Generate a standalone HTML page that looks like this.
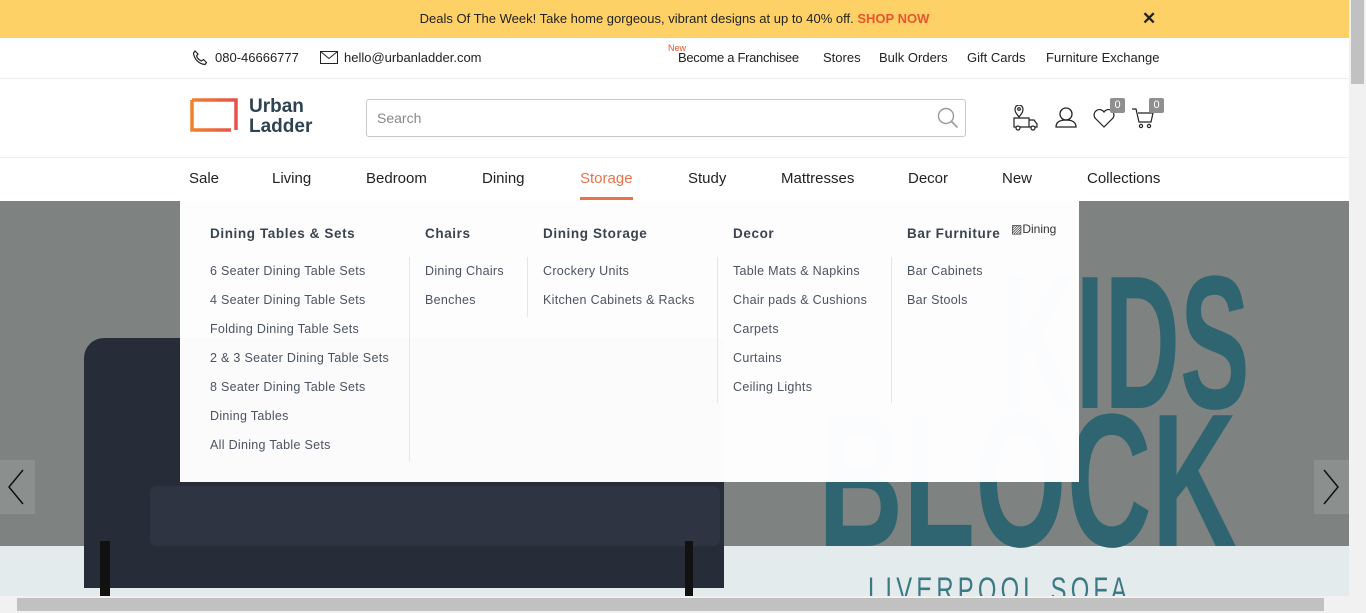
<!DOCTYPE html>
<html><head><meta charset="utf-8"><style>
*{margin:0;padding:0;box-sizing:border-box}
html,body{width:1366px;height:613px;overflow:hidden}
body{font-family:"Liberation Sans",sans-serif;position:relative;background:#fff;color:#222}
.a{position:absolute}
.top{left:0;top:0;width:1349px;height:38px;background:#fed166;text-align:center;font-size:13px;line-height:38px;color:#222}
.top b{color:#e8552d;font-weight:bold}
.nav a{position:absolute;top:170px;font-size:15px;color:#222}
.mm{left:180px;top:201px;width:899px;height:281px;background:rgba(255,255,255,.985)}
.mm h4{position:absolute;font-size:13.5px;font-weight:bold;color:#3a4450;letter-spacing:.6px;top:25px}
.mm p{position:absolute;font-size:12.5px;color:#4a5460;letter-spacing:.3px;line-height:29px}
.vl{position:absolute;width:1px;background:#e6e6e6}
.badge{position:absolute;width:15px;height:15px;background:#8f8f8f;color:#fff;font-size:11px;text-align:center;line-height:15px;border-radius:2px}
.hero{left:0;top:201px;width:1349px;height:395px;overflow:hidden;background:#7e8382}
.big{position:absolute;font-weight:bold;color:#2e6570;white-space:nowrap;transform-origin:left top;font-family:"Liberation Sans Narrow","Liberation Sans",sans-serif}
</style></head><body>
<div class="a top">Deals Of The Week! Take home gorgeous, vibrant designs at up to 40% off. <b>SHOP NOW</b></div>
<div class="a" style="left:1142px;top:9px;font-size:17px;font-weight:bold">✕</div>
<svg class="a" style="left:192px;top:50px" width="16" height="16" viewBox="0 0 16 16"><path d="M3 1l3 3-1.5 2a9 9 0 0 0 5 5L11.5 9.5l3 3-1.5 2C7 14 2 9 1.5 3z" fill="none" stroke="#222" stroke-width="1.2"/></svg>
<div class="a" style="left:215px;top:50px;font-size:13px">080-46666777</div>
<svg class="a" style="left:320px;top:51px" width="18" height="13"><rect x=".5" y=".5" width="17" height="12" fill="none" stroke="#222"/><path d="M.5 .5l8.5 7 8.5-7" fill="none" stroke="#222"/></svg>
<div class="a" style="left:344px;top:50px;font-size:13px">hello@urbanladder.com</div>
<div class="a" style="left:668px;top:43px;font-size:9px;color:#e8552d">New</div>
<div class="a" style="left:678px;top:50px;font-size:13px;letter-spacing:-.3px">Become a Franchisee</div>
<div class="a" style="left:823px;top:50px;font-size:13px">Stores</div>
<div class="a" style="left:879px;top:50px;font-size:13px">Bulk Orders</div>
<div class="a" style="left:967px;top:50px;font-size:13px">Gift Cards</div>
<div class="a" style="left:1046px;top:50px;font-size:13px">Furniture Exchange</div>
<div class="a" style="left:0;top:78px;width:1349px;height:1px;background:#eee"></div>
<svg class="a" style="left:190px;top:98px" width="50" height="36"><defs><linearGradient id="g"><stop offset="0" stop-color="#f0822c"/><stop offset="1" stop-color="#e84f4f"/></linearGradient></defs><path d="M2 2H46V32M41 32H2V2" fill="none" stroke="url(#g)" stroke-width="3.5"/></svg>
<div class="a" style="left:249px;top:97px;font-size:19px;font-weight:bold;color:#2e4352;line-height:20px">Urban<br>Ladder</div>
<div class="a" style="left:366px;top:99px;width:600px;height:38px;border:1px solid #c8c8c8;border-radius:3px;font-size:14px;color:#888;padding:10px 10px">Search</div>
<svg class="a" style="left:937px;top:107px" width="22" height="22"><circle cx="9" cy="9" r="7.5" fill="none" stroke="#999" stroke-width="1.4"/><path d="M14.5 14.5l6 6" stroke="#999" stroke-width="1.6"/></svg>
<svg class="a" style="left:1013px;top:105px" width="26" height="26" fill="none" stroke="#222" stroke-width="1.2"><path d="M1 13h15v9H1zM16 15h5l3 4v3h-8"/><circle cx="5" cy="23" r="2" fill="#fff"/><circle cx="20" cy="23" r="2" fill="#fff"/><path d="M6 12c-4-5-4-6-4-8a4 4 0 0 1 8 0c0 2 0 3-4 8z" fill="#fff"/><circle cx="6" cy="4" r="1.3"/></svg>
<svg class="a" style="left:1055px;top:106px" width="22" height="22" fill="none" stroke="#222" stroke-width="1.3"><circle cx="11" cy="8" r="6"/><path d="M1 21c0-5 4-7 10-7s10 2 10 7z"/></svg>
<svg class="a" style="left:1093px;top:108px" width="22" height="20" fill="none" stroke="#222" stroke-width="1.2"><path d="M11 19L2 10a5 5 0 0 1 9-6 5 5 0 0 1 9 6z"/></svg>
<div class="badge" style="left:1110px;top:98px">0</div>
<svg class="a" style="left:1132px;top:107px" width="22" height="22" fill="none" stroke="#222" stroke-width="1.2"><path d="M0 2h4l3 13h12l2-9H6"/><circle cx="9" cy="19" r="1.6"/><circle cx="17" cy="19" r="1.6"/></svg>
<div class="badge" style="left:1149px;top:98px">0</div>
<div class="a" style="left:0;top:157px;width:1349px;height:1px;background:#eee"></div>
<div class="nav">
<a style="left:189px">Sale</a><a style="left:272px">Living</a><a style="left:366px">Bedroom</a><a style="left:482px">Dining</a><a style="left:580px;color:#e8734a">Storage</a><a style="left:688px">Study</a><a style="left:781px">Mattresses</a><a style="left:908px">Decor</a><a style="left:1002px">New</a><a style="left:1087px">Collections</a>
</div>
<div class="a" style="left:580px;top:197px;width:53px;height:3px;background:#e8734a"></div>
<div class="a hero">
<div class="a" style="left:0;top:345px;width:1349px;height:50px;background:#e4ebec"></div>
<div class="big" style="left:1000px;top:62px;font-size:190px;line-height:160px;transform:scaleX(.55)">KIDS</div>
<div class="big" style="left:818px;top:200px;font-size:190px;line-height:160px;transform:scaleX(.62)">BLOCK</div>
<div class="a" style="left:868px;top:370px;font-size:34px;color:#3b7a85;letter-spacing:6px;white-space:nowrap;transform:scaleX(.7);transform-origin:left top">LIVERPOOL SOFA</div>
<div class="a" style="left:84px;top:137px;width:640px;height:250px;background:#272c39;border-radius:20px 6px 0 0"></div>
<div class="a" style="left:150px;top:285px;width:570px;height:60px;background:#2f3442;border-radius:6px"></div>
<div class="a" style="left:100px;top:340px;width:10px;height:60px;background:#111"></div>
<div class="a" style="left:685px;top:340px;width:8px;height:60px;background:#111"></div>
<div class="a" style="left:0;top:259px;width:35px;height:54px;background:#8b8f8e"></div>
<div class="a" style="left:1314px;top:259px;width:35px;height:54px;background:#8b8f8e"></div>
<svg class="a" style="left:5px;top:267px" width="22" height="38"><path d="M18 2L4 19l14 17" fill="none" stroke="#111" stroke-width="1.5"/></svg>
<svg class="a" style="left:1320px;top:267px" width="22" height="38"><path d="M4 2l14 17L4 36" fill="none" stroke="#111" stroke-width="1.5"/></svg>
</div>
<div class="a mm">
<h4 style="left:30px">Dining Tables &amp; Sets</h4>
<h4 style="left:245px">Chairs</h4>
<h4 style="left:363px">Dining Storage</h4>
<h4 style="left:553px">Decor</h4>
<h4 style="left:727px">Bar Furniture</h4>
<div class="a" style="left:831px;top:21px;font-size:12px;color:#333">▨Dining</div>
<div class="vl" style="left:229px;top:56px;height:205px"></div>
<div class="vl" style="left:347px;top:56px;height:60px"></div>
<div class="vl" style="left:537px;top:56px;height:146px"></div>
<div class="vl" style="left:711px;top:56px;height:146px"></div>
<p style="left:30px;top:56px">6 Seater Dining Table Sets<br>4 Seater Dining Table Sets<br>Folding Dining Table Sets<br>2 &amp; 3 Seater Dining Table Sets<br>8 Seater Dining Table Sets<br>Dining Tables<br>All Dining Table Sets</p>
<p style="left:245px;top:56px">Dining Chairs<br>Benches</p>
<p style="left:363px;top:56px">Crockery Units<br>Kitchen Cabinets &amp; Racks</p>
<p style="left:553px;top:56px">Table Mats &amp; Napkins<br>Chair pads &amp; Cushions<br>Carpets<br>Curtains<br>Ceiling Lights</p>
<p style="left:727px;top:56px">Bar Cabinets<br>Bar Stools</p>
</div>
<div class="a" style="left:1349px;top:0;width:17px;height:613px;background:#f1f1f1"></div>
<div class="a" style="left:1351px;top:0;width:13px;height:84px;background:#c1c1c1"></div>
<div class="a" style="left:0;top:596px;width:1349px;height:17px;background:#f1f1f1"></div>
<div class="a" style="left:17px;top:598px;width:1307px;height:13px;background:#c1c1c1"></div>
</body></html>
